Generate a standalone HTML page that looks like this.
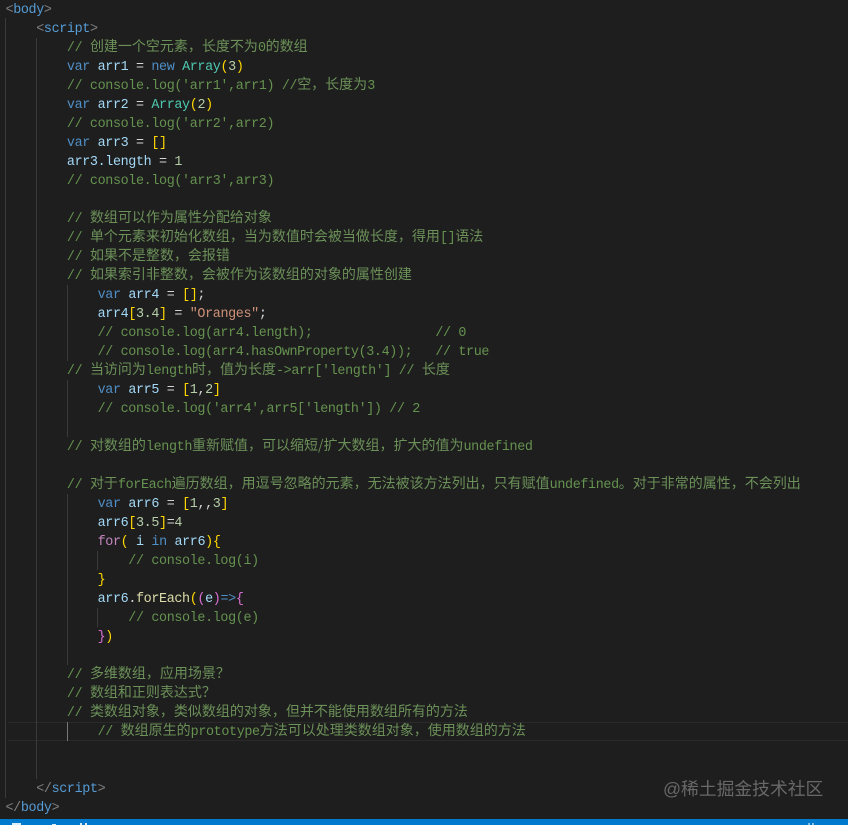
<!DOCTYPE html>
<html lang="zh">
<head>
<meta charset="utf-8">
<title>Code</title>
<style>
html,body{margin:0;padding:0;background:#1e1e1e;}
body{width:848px;height:825px;overflow:hidden;position:relative;}
#ed{position:absolute;left:5.5px;top:1px;font-family:"Liberation Mono",monospace;font-size:13.4px;letter-spacing:-.36px;color:#d4d4d4;filter:blur(.35px);}
#ed div{height:19px;line-height:19px;white-space:pre;}
i{font-style:normal;font-family:"Noto Sans CJK SC","Liberation Sans",sans-serif;font-size:14px;line-height:14px;letter-spacing:0;}
.c{color:#65924f;}
.c i{color:#6b9058;}
.k{color:#4f8ec6;}
.v{color:#a3d9f7;}
.t{color:#4ec9b0;}
.n{color:#b5cea8;}
.s{color:#ce9178;}
.g{color:#ffd700;}
.p{color:#da70d6;}
.b{color:#4aa3e6;}
.a{color:#808080;}
.h{color:#569cd6;}
.f{color:#c586c0;}
.m{color:#dcdcaa;}
.l{position:absolute;width:1px;background:#3a3a3a;}
#wm{position:absolute;left:663px;top:777px;font-family:"Liberation Sans","Noto Sans CJK SC",sans-serif;font-size:17.8px;line-height:24px;color:#686868;white-space:nowrap;filter:blur(.3px);}
#st{position:absolute;left:0;top:819px;width:848px;height:6px;background:#007acc;}
#st b{position:absolute;background:#d9eefa;}
</style>
</head>
<body>
<div style="position:absolute;left:8px;top:722px;width:840px;height:19px;border-top:1px solid #2a2a2a;border-bottom:1px solid #2a2a2a;box-sizing:border-box;"></div>
<div class="l" style="left:5px;top:18px;height:780px"></div>
<div class="l" style="left:36px;top:38px;height:741px"></div>
<div class="l" style="left:67px;top:285px;height:76px"></div>
<div class="l" style="left:67px;top:380px;height:57px"></div>
<div class="l" style="left:67px;top:494px;height:171px"></div>
<div class="l" style="left:67px;top:722px;height:19px;background:#777"></div>
<div class="l" style="left:97px;top:551px;height:19px"></div>
<div class="l" style="left:97px;top:608px;height:19px"></div>
<div id="ed">
<div><span class="a">&lt;</span><span class="h">body</span><span class="a">&gt;</span></div>
<div>    <span class="a">&lt;</span><span class="h">script</span><span class="a">&gt;</span></div>
<div class="c">        // <i>创建一个空元素，长度不为</i>0<i>的数组</i></div>
<div>        <span class="k">var</span> <span class="v">arr1</span> = <span class="k">new</span> <span class="t">Array</span><span class="g">(</span><span class="n">3</span><span class="g">)</span></div>
<div class="c">        // console.log('arr1',arr1) //<i>空，长度为</i>3</div>
<div>        <span class="k">var</span> <span class="v">arr2</span> = <span class="t">Array</span><span class="g">(</span><span class="n">2</span><span class="g">)</span></div>
<div class="c">        // console.log('arr2',arr2)</div>
<div>        <span class="k">var</span> <span class="v">arr3</span> = <span class="g">[]</span></div>
<div>        <span class="v">arr3.length</span> = <span class="n">1</span></div>
<div class="c">        // console.log('arr3',arr3)</div>
<div> </div>
<div class="c">        // <i>数组可以作为属性分配给对象</i></div>
<div class="c">        // <i>单个元素来初始化数组，当为数值时会被当做长度，得用</i>[]<i>语法</i></div>
<div class="c">        // <i>如果不是整数，会报错</i></div>
<div class="c">        // <i>如果索引非整数，会被作为该数组的对象的属性创建</i></div>
<div>            <span class="k">var</span> <span class="v">arr4</span> = <span class="g">[]</span>;</div>
<div>            <span class="v">arr4</span><span class="g">[</span><span class="n">3.4</span><span class="g">]</span> = <span class="s">"Oranges"</span>;</div>
<div class="c">            // console.log(arr4.length);                // 0</div>
<div class="c">            // console.log(arr4.hasOwnProperty(3.4));   // true</div>
<div class="c">        // <i>当访问为</i>length<i>时，值为长度</i>-&gt;arr['length'] // <i>长度</i></div>
<div>            <span class="k">var</span> <span class="v">arr5</span> = <span class="g">[</span><span class="n">1</span>,<span class="n">2</span><span class="g">]</span></div>
<div class="c">            // console.log('arr4',arr5['length']) // 2</div>
<div> </div>
<div class="c">        // <i>对数组的</i>length<i>重新赋值，可以缩短/扩大数组，扩大的值为</i>undefined</div>
<div> </div>
<div class="c">        // <i>对于</i>forEach<i>遍历数组，用逗号忽略的元素，无法被该方法列出，只有赋值</i>undefined<i>。对于非常的属性，不会列出</i></div>
<div>            <span class="k">var</span> <span class="v">arr6</span> = <span class="g">[</span><span class="n">1</span>,,<span class="n">3</span><span class="g">]</span></div>
<div>            <span class="v">arr6</span><span class="g">[</span><span class="n">3.5</span><span class="g">]</span>=<span class="n">4</span></div>
<div>            <span class="f">for</span><span class="g">(</span> <span class="v">i</span> <span class="k">in</span> <span class="v">arr6</span><span class="g">){</span></div>
<div class="c">                // console.log(i)</div>
<div>            <span class="g">}</span></div>
<div>            <span class="v">arr6</span>.<span class="m">forEach</span><span class="g">(</span><span class="p">(</span><span class="v">e</span><span class="p">)</span><span class="k">=&gt;</span><span class="p">{</span></div>
<div class="c">                // console.log(e)</div>
<div>            <span class="p">}</span><span class="g">)</span></div>
<div> </div>
<div class="c">        // <i>多维数组，应用场景？</i></div>
<div class="c">        // <i>数组和正则表达式？</i></div>
<div class="c">        // <i>类数组对象，类似数组的对象，但并不能使用数组所有的方法</i></div>
<div class="c">            // <i>数组原生的</i>prototype<i>方法可以处理类数组对象，使用数组的方法</i></div>
<div> </div>
<div> </div>
<div>    <span class="a">&lt;/</span><span class="h">script</span><span class="a">&gt;</span></div>
<div><span class="a">&lt;/</span><span class="h">body</span><span class="a">&gt;</span></div>
</div>
<div id="wm">@稀土掘金技术社区</div>
<div id="st">
<b style="left:12px;top:4px;width:9px;height:2px"></b>
<b style="left:52px;top:5px;width:4px;height:1px"></b>
<b style="left:80px;top:4px;width:2px;height:2px"></b>
<b style="left:85px;top:4px;width:2px;height:2px"></b>
<b style="left:808px;top:4px;width:2px;height:2px;opacity:.6"></b>
<b style="left:812px;top:4px;width:2px;height:2px;opacity:.6"></b>
</div>
</body>
</html>
